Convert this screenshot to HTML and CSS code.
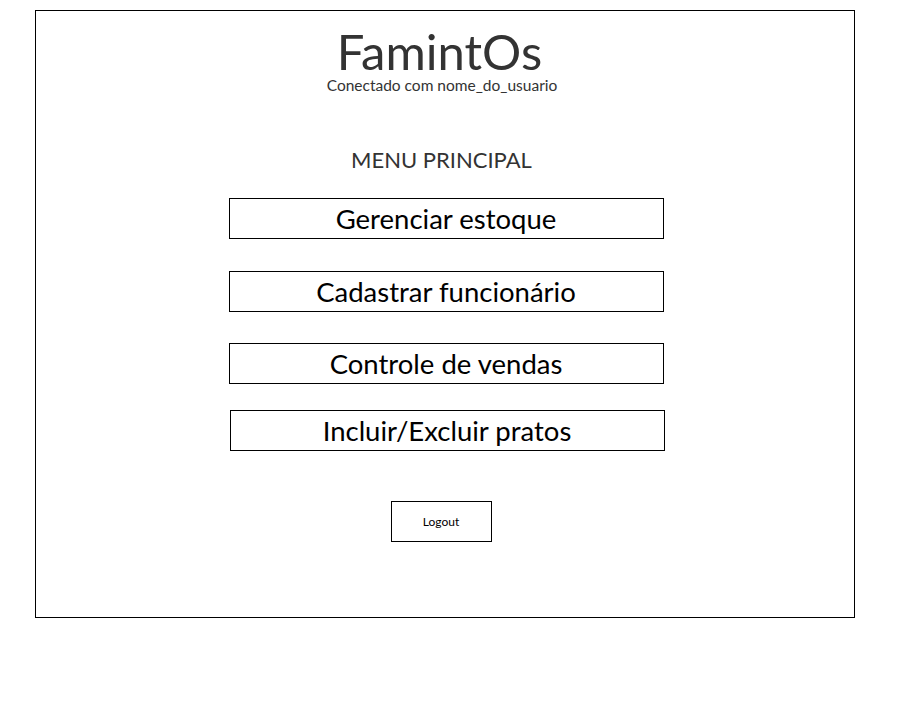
FILE: index.html
```html
<!DOCTYPE html>
<html lang="pt">
<head>
<meta charset="utf-8">
<title>FamintOs</title>
<link rel="stylesheet" href="styles.css">
</head>
<body>
<div class="frame">
  <header class="header">
    <h1 class="title">FamintOs</h1>
    <p class="subtitle">Conectado com nome_do_usuario</p>
  </header>
  <h2 class="menu-title">MENU PRINCIPAL</h2>
  <nav class="menu">
    <button class="menu-btn b1">Gerenciar estoque</button>
    <button class="menu-btn b2">Cadastrar funcionário</button>
    <button class="menu-btn b3">Controle de vendas</button>
    <button class="menu-btn b4">Incluir/Excluir pratos</button>
  </nav>
  <button class="logout">Logout</button>
</div>
</body>
</html>
```

FILE: styles.css
```css
html, body {
  margin: 0;
  padding: 0;
  background: #fff;
}
body {
  font-family: Lato, "Liberation Sans", sans-serif;
  color: #333;
}
.frame {
  box-sizing: border-box;
  width: 820px;
  height: 608px;
  margin: 10px 0 0 35px;
  border: 1px solid #000;
  padding-top: 16px;
  display: flex;
  flex-direction: column;
  align-items: center;
}
.header {
  display: flex;
  flex-direction: column;
  align-items: center;
}
.title {
  margin: 0;
  padding-right: 11px;
  font-size: 49px;
  line-height: 49px;
  font-weight: 400;
  color: #333;
}
.subtitle {
  margin: 1px 0 0;
  padding-right: 6px;
  font-size: 15.5px;
  line-height: 16px;
  color: #333;
}
.menu-title {
  margin: 56px 0 0;
  padding-right: 7px;
  font-size: 22px;
  line-height: 22px;
  font-weight: 400;
  color: #333;
}
.menu {
  margin-top: 27px;
  padding-left: 2px;
  display: flex;
  flex-direction: column;
  align-items: center;
}
.menu-btn {
  box-sizing: border-box;
  width: 435px;
  height: 41px;
  margin: 0;
  padding: 0;
  border: 1px solid #000;
  background: #fff;
  font-family: Lato, "Liberation Sans", sans-serif;
  font-size: 27.5px;
  color: #000;
  line-height: 39px;
}
.b2 { margin-top: 32px; }
.b3 { margin-top: 31px; }
.b4 { margin-top: 26px; margin-left: 2px; }
.logout {
  box-sizing: border-box;
  width: 101px;
  height: 41px;
  margin: 50px 8px 0 0;
  padding: 0;
  border: 1px solid #000;
  background: #fff;
  font-family: Lato, "Liberation Sans", sans-serif;
  font-size: 12px;
  color: #000;
}
```
